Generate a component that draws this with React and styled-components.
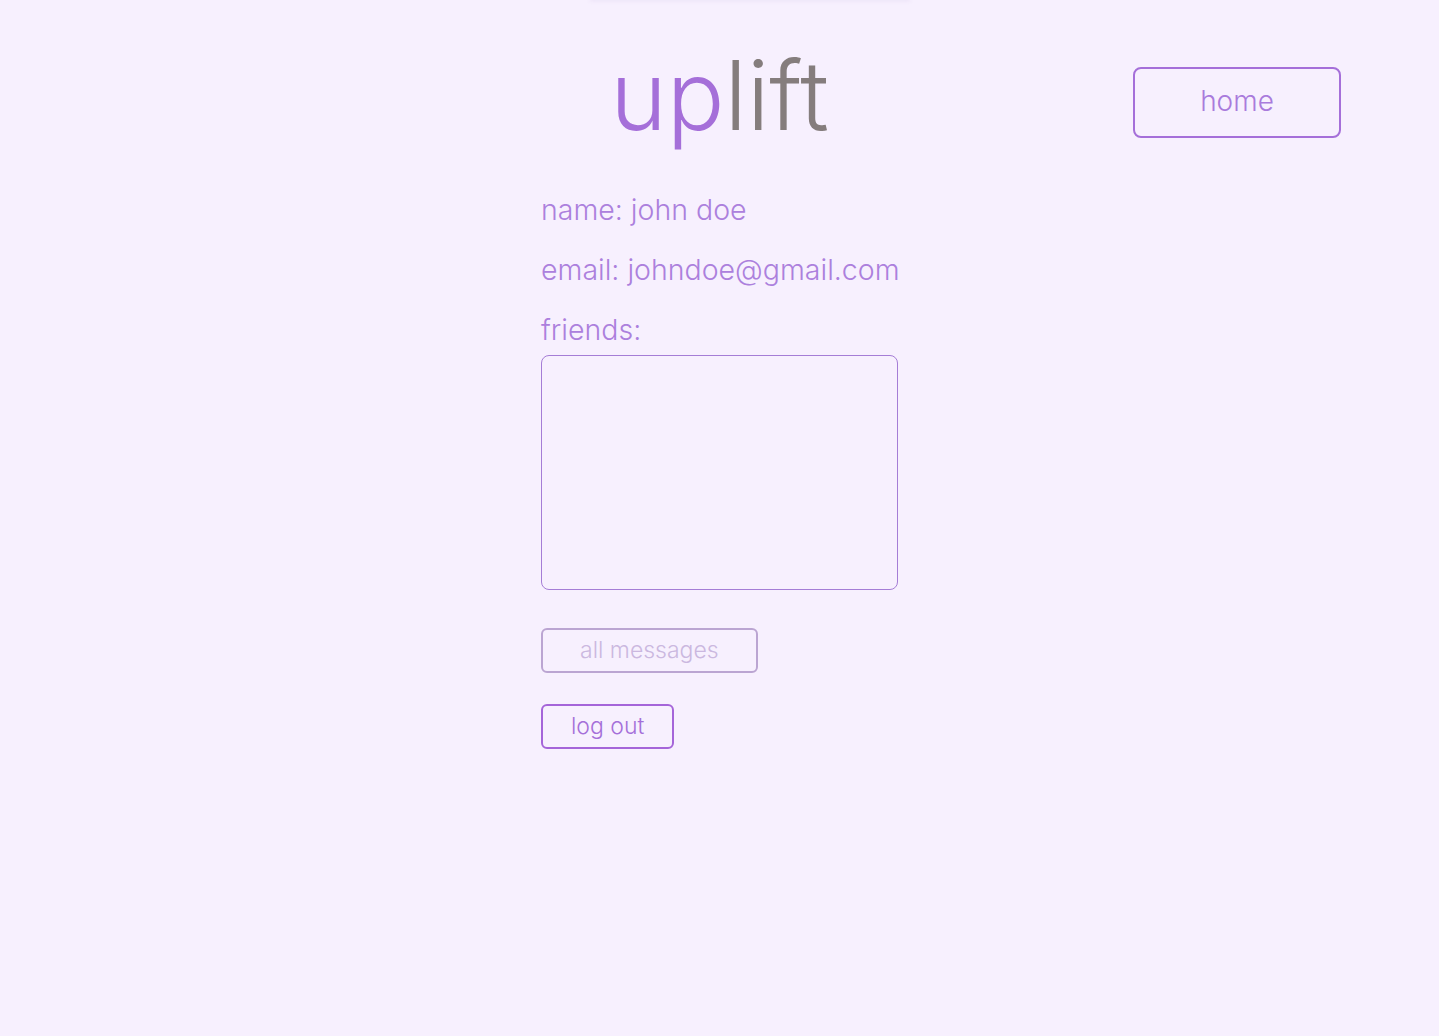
import styled, { createGlobalStyle } from "styled-components";

const GlobalStyle = createGlobalStyle`
  html, body {
    margin: 0;
    padding: 0;
    background-color: #f7f0fe;
  }
  body {
    font-family: "Inter", "Roboto", "Liberation Sans", sans-serif;
    font-weight: 300;
  }
`;

const Page = styled.div`
  min-height: 1036px;
  background-color: #f7f0fe;
  position: relative;
`;

const TopGlow = styled.div`
  position: absolute;
  top: -4px;
  left: 590px;
  width: 320px;
  height: 4px;
  box-shadow: 0 1px 4px rgba(150, 120, 190, 0.12);
`;

const Header = styled.header`
  display: grid;
  grid-template-columns: 1fr auto 1fr;
  align-items: start;
  padding: 28px 98px 0;
`;

const Title = styled.h1`
  grid-column: 2;
  margin: -3px 0 3px;
  font-size: 96px;
  font-weight: 300;
  line-height: 140px;
  color: #857d7d;
  span {
    color: #a56fd9;
  }
`;

const HomeButton = styled.button`
  grid-column: 3;
  justify-self: end;
  box-sizing: border-box;
  margin-top: 39px;
  width: 208px;
  height: 71px;
  padding-bottom: 4px;
  background: transparent;
  border: 2px solid #a56fd9;
  border-radius: 8px;
  font-family: inherit;
  font-weight: 300;
  font-size: 28px;
  color: #a97bdc;
  cursor: pointer;
`;

const Main = styled.main`
  width: 357px;
  margin: 12px auto 0;
  display: flex;
  flex-direction: column;
  align-items: flex-start;
`;

const Field = styled.p`
  margin: 0;
  font-size: 28.5px;
  line-height: 60px;
  color: #ac80dd;
  white-space: nowrap;
`;

const FriendsBox = styled.div`
  box-sizing: border-box;
  width: 357px;
  height: 235px;
  border: 1px solid #a57dd6;
  border-radius: 8px;
  margin-top: -5px;
`;

const OutlineButton = styled.button`
  box-sizing: border-box;
  height: 45px;
  padding: 0 ${(p) => p.$pad}px 2px;
  background: transparent;
  border: 2px solid ${(p) => (p.$muted ? "#bba5d2" : "#a565d9")};
  border-radius: 6px;
  font-family: inherit;
  font-weight: 300;
  font-size: 23px;
  color: ${(p) => (p.$muted ? "#cbb8e0" : "#a56fd9")};
  margin-top: ${(p) => p.$top}px;
  cursor: pointer;
`;

export default function App() {
  return (
    <Page>
      <GlobalStyle />
      <TopGlow />
      <Header>
        <Title>
          <span>up</span>lift
        </Title>
        <HomeButton>home</HomeButton>
      </Header>
      <Main>
        <Field>name: john doe</Field>
        <Field>email: johndoe@gmail.com</Field>
        <Field>friends:</Field>
        <FriendsBox />
        <OutlineButton $muted $pad={37} $top={38}>
          all messages
        </OutlineButton>
        <OutlineButton $pad={28} $top={31}>
          log out
        </OutlineButton>
      </Main>
    </Page>
  );
}
